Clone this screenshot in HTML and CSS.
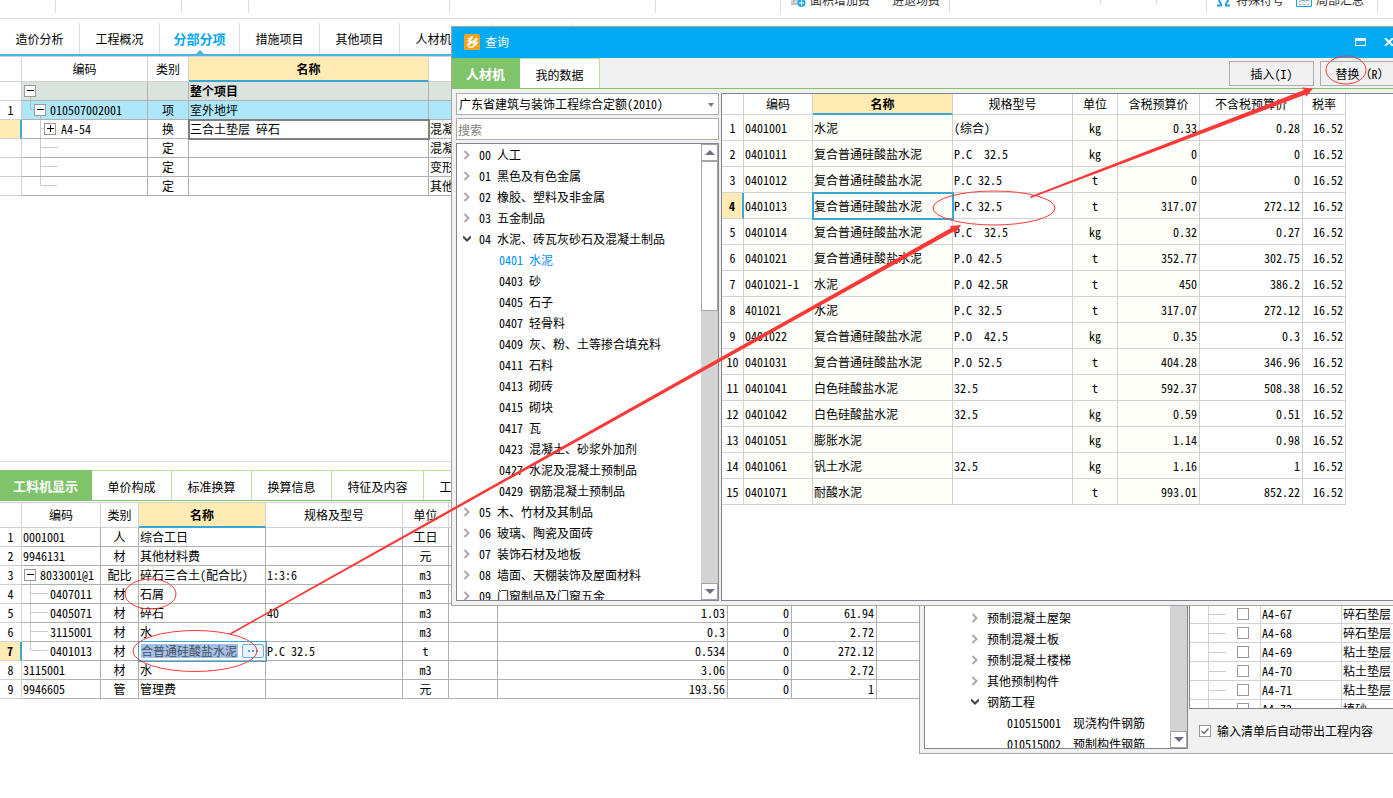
FILE: index.html
```html
<!DOCTYPE html>
<html lang="zh-CN">
<head>
<meta charset="utf-8">
<title>查询</title>
<link rel="stylesheet" href="styles.css">
</head>
<body>
<svg class="defs" width="0" height="0" aria-hidden="true">
  <symbol id="closed" viewBox="0 0 8 10"><path d="M1.500 1L5.500 5l-4 4" fill="none" stroke="#aaa" stroke-width="2"/></symbol>
  <symbol id="open" viewBox="0 0 8 10"><path d="M0 2.500l4 4 4-4" fill="none" stroke="#444" stroke-width="2"/></symbol>
  <symbol id="branch" viewBox="0 0 28 18"><path d="M8.500 0v18M9 8.500h17" stroke="#ccc"/></symbol>
  <symbol id="branch-deep" viewBox="0 0 39 18"><path d="M18.500 0v18M19 8.500h17" stroke="#ccc"/></symbol>
</svg>
<main class="app">
  <header class="ribbon">
    <div class="group g56"></div><div class="group g126"></div><div class="group g67"></div><div class="group g201"></div><div class="group g206"></div><div class="group g125"></div>
    <div class="group g169">
      <span class="tool"><svg width="16" height="16" viewBox="0 0 16 16"><path d="M1 2h11v11H1z" fill="#d6d6d6"/><path d="M1 13h8M3 10h2M7 10h2" stroke="#999"/><circle cx="11.500" cy="12" r="4" fill="#1ba8e8"/><path d="M9 12h5M11.500 9.500v5" stroke="#fff"/></svg>面积增加费</span>
      <span class="tool tool-late">进退场费</span>
    </div>
    <div class="group g151 short"></div><div class="group g56 short"></div><div class="group g50"></div>
    <div class="group g171">
      <span class="tool"><svg width="16" height="16" viewBox="0 0 16 16"><path d="M1 14.500h4c1-2-2-3-2-6M14 14.500h-4c-1-2 2-3 2-6" fill="none" stroke="#2b9fd6" stroke-width="2"/></svg>特殊符号</span>
      <span class="tool"><svg width="16" height="16" viewBox="0 0 16 16"><path d="M.5 2.500h15v13H.5z" fill="#e8f6fd" stroke="#1ba8e8"/><path d="M3 13.500h2M7 13.500h2M11 13.500h2" stroke="#d8b860"/><path d="M3 11l3-2 3 1 4-1" fill="none" stroke="#8aa0a8"/></svg>局部汇总</span>
    </div>
  </header>

  <section class="pane-top">
    <nav class="tabs tabs-blue">
      <button class="tab">造价分析</button><button class="tab">工程概况</button><button class="tab active">分部分项<svg class="notch" width="8" height="4" viewBox="0 0 8 4"><path d="M0 4L4 0l4 4z" fill="#44b6e6"/></svg></button><button class="tab">措施项目</button><button class="tab">其他项目</button><button class="tab wide">人材机汇总</button><button class="tab">费用汇总</button>
    </nav>
    <table class="sheet">
      <colgroup><col class="c22"><col class="c126"><col class="c41"><col class="c240"><col></colgroup>
      <thead><tr><th></th><th>编码</th><th>类别</th><th class="hot">名称</th><th></th></tr></thead>
      <tbody>
        <tr class="project"><td class="num"></td><td><div class="node"><svg width="22" height="18" viewBox="0 0 22 18"><path d="M8.500 15v3" stroke="#bbb"/><rect x="2.500" y="3.500" width="11" height="11" fill="#fff" stroke="#999"/><path d="M5 8.500h7" stroke="#000"/></svg></div></td><td></td><td>整个项目</td><td></td></tr>
        <tr class="item"><td class="num">1</td><td><div class="node"><svg width="28" height="18" viewBox="0 0 28 18"><path d="M8.500 0v8.500h4M18.500 14v4" fill="none" stroke="#bbb"/><rect x="12.500" y="3.500" width="11" height="11" fill="#fff" stroke="#999"/><path d="M15 8.500h7" stroke="#000"/></svg>010507002001</div></td><td class="mid">项</td><td>室外地坪</td><td></td></tr>
        <tr><td class="num now"></td><td><div class="node"><svg width="39" height="18" viewBox="0 0 39 18"><path d="M18.500 0v18M19 8.500h4" stroke="#ccc"/><rect x="22.500" y="3.500" width="11" height="11" fill="#fff" stroke="#999"/><path d="M25 8.500h7M28.500 5v7" stroke="#000"/></svg>A4-54</div></td><td class="mid">换</td><td class="focus-grey">三合土垫层 碎石</td><td>混凝土</td></tr>
        <tr><td class="num"></td><td><div class="node"><svg width="39" height="18"><use href="#branch-deep"/></svg></div></td><td class="mid">定</td><td></td><td>混凝土</td></tr>
        <tr><td class="num"></td><td><div class="node"><svg width="39" height="18"><use href="#branch-deep"/></svg></div></td><td class="mid">定</td><td></td><td>变形缝</td></tr>
        <tr><td class="num"></td><td><div class="node"><svg width="39" height="18" viewBox="0 0 39 18"><path d="M18.500 0v8.500h17" fill="none" stroke="#ccc"/></svg></div></td><td class="mid">定</td><td></td><td>其他</td></tr>
      </tbody>
    </table>
  </section>

  <section class="pane-bottom">
    <nav class="tabs tabs-green">
      <button class="tab wide active">工料机显示</button><button class="tab">单价构成</button><button class="tab">标准换算</button><button class="tab">换算信息</button><button class="tab wide">特征及内容</button><button class="tab wide">工程量明细</button>
    </nav>
    <table class="sheet">
      <colgroup><col class="c22"><col class="c79"><col class="c38"><col class="c127"><col class="c137"><col class="c46"><col class="c49"><col class="c230"><col class="c64"><col class="c85"><col></colgroup>
      <thead><tr><th></th><th>编码</th><th>类别</th><th class="hot">名称</th><th>规格及型号</th><th>单位</th><th></th><th></th><th></th><th></th><th></th></tr></thead>
      <tbody>
        <tr><td class="num">1</td><td>0001001</td><td class="mid">人</td><td>综合工日</td><td></td><td class="mid">工日</td><td></td><td></td><td></td><td></td><td></td></tr>
        <tr><td class="num">2</td><td>9946131</td><td class="mid">材</td><td>其他材料费</td><td></td><td class="mid">元</td><td></td><td></td><td></td><td></td><td></td></tr>
        <tr><td class="num">3</td><td><div class="node"><svg width="18" height="18" viewBox="0 0 18 18"><path d="M8.500 14v4" stroke="#ccc"/><rect x="2.500" y="3.500" width="11" height="11" fill="#fff" stroke="#999"/><path d="M5 8.500h7" stroke="#000"/></svg>8033001@1</div></td><td class="mid">配比</td><td>碎石三合土(配合比)</td><td>1:3:6</td><td class="mid">m3</td><td></td><td></td><td></td><td></td><td></td></tr>
        <tr><td class="num">4</td><td><div class="node"><svg width="28" height="18"><use href="#branch"/></svg>0407011</div></td><td class="mid">材</td><td>石屑</td><td></td><td class="mid">m3</td><td></td><td></td><td></td><td></td><td></td></tr>
        <tr><td class="num">5</td><td><div class="node"><svg width="28" height="18"><use href="#branch"/></svg>0405071</div></td><td class="mid">材</td><td>碎石</td><td>40</td><td class="mid">m3</td><td></td><td class="val">1.03</td><td class="val">0</td><td class="val">61.94</td><td></td></tr>
        <tr><td class="num">6</td><td><div class="node"><svg width="28" height="18"><use href="#branch"/></svg>3115001</div></td><td class="mid">材</td><td>水</td><td></td><td class="mid">m3</td><td></td><td class="val">0.3</td><td class="val">0</td><td class="val">2.72</td><td></td></tr>
        <tr><td class="num now">7</td><td><div class="node"><svg width="28" height="18" viewBox="0 0 28 18"><path d="M8.500 0v8.500h17" fill="none" stroke="#ccc"/></svg>0401013</div></td><td class="mid">材</td><td class="focus-thin"><div class="editor"><input class="edit" type="text" aria-label="名称" value="合普通硅酸盐水泥"><button class="more" aria-label="更多"><svg width="12" height="4" viewBox="0 0 12 4"><path d="M1 1h2v2H1zM5 1h2v2H5zM9 1h2v2H9z" fill="#5fa3dc"/></svg></button></div></td><td>P.C 32.5</td><td class="mid">t</td><td></td><td class="val">0.534</td><td class="val">0</td><td class="val">272.12</td><td></td></tr>
        <tr><td class="num">8</td><td>3115001</td><td class="mid">材</td><td>水</td><td></td><td class="mid">m3</td><td></td><td class="val">3.06</td><td class="val">0</td><td class="val">2.72</td><td></td></tr>
        <tr><td class="num">9</td><td>9946605</td><td class="mid">管</td><td>管理费</td><td></td><td class="mid">元</td><td></td><td class="val">193.56</td><td class="val">0</td><td class="val">1</td><td></td></tr>
      </tbody>
    </table>
  </section>

  <section class="window window-back">
    <div class="back-tree">
      <ul class="tree">
        <li><svg class="chev" width="8" height="10"><use href="#closed"/></svg>预制混凝土屋架</li>
        <li><svg class="chev" width="8" height="10"><use href="#closed"/></svg>预制混凝土板</li>
        <li><svg class="chev" width="8" height="10"><use href="#closed"/></svg>预制混凝土楼梯</li>
        <li><svg class="chev" width="8" height="10"><use href="#closed"/></svg>其他预制构件</li>
        <li><svg class="chev" width="8" height="10"><use href="#open"/></svg>钢筋工程</li>
        <li class="leaf">010515001&nbsp; 现浇构件钢筋</li>
        <li class="leaf">010515002&nbsp; 预制构件钢筋</li>
      </ul>
      <div class="scroll"><span class="track"></span><button class="arrow" aria-label="向下"><svg width="10" height="5" viewBox="0 0 10 5"><path d="M0 0h10L5 5z" fill="#6b6f80"/></svg></button></div>
    </div>
    <div class="back-side">
      <div class="back-grid">
        <table class="sheet light">
          <colgroup><col class="c19"><col class="c52"><col class="c81"><col></colgroup>
          <tbody>
            <tr><td></td><td><div class="pick"><span class="dash"></span><input class="check" type="checkbox" aria-label="A4-67"></div></td><td>A4-67</td><td>碎石垫层</td></tr>
            <tr><td></td><td><div class="pick"><span class="dash"></span><input class="check" type="checkbox" aria-label="A4-68"></div></td><td>A4-68</td><td>碎石垫层</td></tr>
            <tr><td></td><td><div class="pick"><span class="dash"></span><input class="check" type="checkbox" aria-label="A4-69"></div></td><td>A4-69</td><td>粘土垫层</td></tr>
            <tr><td></td><td><div class="pick"><span class="dash"></span><input class="check" type="checkbox" aria-label="A4-70"></div></td><td>A4-70</td><td>粘土垫层</td></tr>
            <tr><td></td><td><div class="pick"><span class="dash"></span><input class="check" type="checkbox" aria-label="A4-71"></div></td><td>A4-71</td><td>粘土垫层</td></tr>
            <tr><td></td><td><div class="pick"><span class="dash"></span><input class="check" type="checkbox" aria-label="A4-72"></div></td><td>A4-72</td><td>填砂</td></tr>
          </tbody>
        </table>
      </div>
      <label class="option"><input class="check" type="checkbox" checked>输入清单后自动带出工程内容</label>
    </div>
  </section>

  <section class="window window-front">
    <div class="title">
      <svg width="16" height="16" viewBox="0 0 16 16"><rect width="16" height="16" rx="2" fill="#f9a01b"/><path d="M2 4.500C4 4.500 6 3 8.500 2L9 4 6 7l3-.5L8 9l-4 3.500L3 10l3-2.500H3L5 5z" fill="#fff"/><path d="M9 6.500L12.500 3.500 14 5l-2.500 3 2.500-.5-1 3L8 14H5l-1-1.500h3.500L11 9.500 8 10z" fill="#fff"/></svg>
      <h1 class="title-text">查询</h1>
      <button class="win-btn" aria-label="最大化"><svg width="11" height="8" viewBox="0 0 11 8"><path d="M.5.5h10v7H.5z" fill="none" stroke="#fff"/><path d="M0 0h11v3H0z" fill="#fff"/></svg></button>
      <button class="win-btn" aria-label="关闭"><svg width="11" height="8" viewBox="0 0 11 8"><path d="M1 0l8 8M9 0L1 8" stroke="#fff" stroke-width="2"/></svg></button>
    </div>
    <div class="bar">
      <nav class="tabs tabs-dialog"><button class="tab short-tab active">人材机</button><button class="tab">我的数据</button></nav>
      <div class="actions"><button class="btn">插入(I)</button><button class="btn">替换（R）</button></div>
    </div>
    <div class="body">
      <div class="left">
        <div class="combo"><select class="select" aria-label="定额库"><option>广东省建筑与装饰工程综合定额(2010)</option></select><svg class="combo-arrow" width="6" height="4" viewBox="0 0 6 4"><path d="M0 0h6L3 4z" fill="#777b88"/></svg></div>
        <input class="search" type="text" placeholder="搜索" aria-label="搜索">
        <div class="tree-box">
          <ul class="tree">
            <li><svg class="chev" width="8" height="10"><use href="#closed"/></svg>00 人工</li>
            <li><svg class="chev" width="8" height="10"><use href="#closed"/></svg>01 黑色及有色金属</li>
            <li><svg class="chev" width="8" height="10"><use href="#closed"/></svg>02 橡胶、塑料及非金属</li>
            <li><svg class="chev" width="8" height="10"><use href="#closed"/></svg>03 五金制品</li>
            <li><svg class="chev" width="8" height="10"><use href="#open"/></svg>04 水泥、砖瓦灰砂石及混凝土制品</li>
            <li class="leaf chosen">0401 水泥</li>
            <li class="leaf">0403 砂</li>
            <li class="leaf">0405 石子</li>
            <li class="leaf">0407 轻骨料</li>
            <li class="leaf">0409 灰、粉、土等掺合填充料</li>
            <li class="leaf">0411 石料</li>
            <li class="leaf">0413 砌砖</li>
            <li class="leaf">0415 砌块</li>
            <li class="leaf">0417 瓦</li>
            <li class="leaf">0423 混凝土、砂浆外加剂</li>
            <li class="leaf">0427 水泥及混凝土预制品</li>
            <li class="leaf">0429 钢筋混凝土预制品</li>
            <li><svg class="chev" width="8" height="10"><use href="#closed"/></svg>05 木、竹材及其制品</li>
            <li><svg class="chev" width="8" height="10"><use href="#closed"/></svg>06 玻璃、陶瓷及面砖</li>
            <li><svg class="chev" width="8" height="10"><use href="#closed"/></svg>07 装饰石材及地板</li>
            <li><svg class="chev" width="8" height="10"><use href="#closed"/></svg>08 墙面、天棚装饰及屋面材料</li>
            <li><svg class="chev" width="8" height="10"><use href="#closed"/></svg>09 门窗制品及门窗五金</li>
          </ul>
          <div class="scroll"><button class="arrow" aria-label="向上"><svg width="10" height="5" viewBox="0 0 10 5"><path d="M0 5h10L5 0z" fill="#6b6f80"/></svg></button><span class="thumb"></span><span class="track"></span><button class="arrow" aria-label="向下"><svg width="10" height="5" viewBox="0 0 10 5"><path d="M0 0h10L5 5z" fill="#6b6f80"/></svg></button></div>
        </div>
      </div>
      <div class="right">
        <table class="result">
          <colgroup><col class="c22"><col class="c69"><col class="c140"><col class="c120"><col class="c45"><col class="c82"><col class="c103"><col class="c43"></colgroup>
          <thead><tr><th></th><th>编码</th><th class="hot">名称</th><th>规格型号</th><th>单位</th><th>含税预算价</th><th>不含税预算价</th><th>税率</th></tr></thead>
          <tbody>
            <tr><td class="num">1</td><td>0401001</td><td>水泥</td><td>(综合)</td><td>kg</td><td>0.33</td><td>0.28</td><td>16.52</td></tr>
            <tr><td class="num">2</td><td>0401011</td><td>复合普通硅酸盐水泥</td><td>P.C&nbsp; 32.5</td><td>kg</td><td>0</td><td>0</td><td>16.52</td></tr>
            <tr><td class="num">3</td><td>0401012</td><td>复合普通硅酸盐水泥</td><td>P.C 32.5</td><td>t</td><td>0</td><td>0</td><td>16.52</td></tr>
            <tr><td class="num now">4</td><td>0401013</td><td class="focus">复合普通硅酸盐水泥</td><td>P.C 32.5</td><td>t</td><td>317.07</td><td>272.12</td><td>16.52</td></tr>
            <tr><td class="num">5</td><td>0401014</td><td>复合普通硅酸盐水泥</td><td>P.C&nbsp; 32.5</td><td>kg</td><td>0.32</td><td>0.27</td><td>16.52</td></tr>
            <tr><td class="num">6</td><td>0401021</td><td>复合普通硅酸盐水泥</td><td>P.O 42.5</td><td>t</td><td>352.77</td><td>302.75</td><td>16.52</td></tr>
            <tr><td class="num">7</td><td>0401021-1</td><td>水泥</td><td>P.O 42.5R</td><td>t</td><td>450</td><td>386.2</td><td>16.52</td></tr>
            <tr><td class="num">8</td><td>401021</td><td>水泥</td><td>P.C 32.5</td><td>t</td><td>317.07</td><td>272.12</td><td>16.52</td></tr>
            <tr><td class="num">9</td><td>0401022</td><td>复合普通硅酸盐水泥</td><td>P.O&nbsp; 42.5</td><td>kg</td><td>0.35</td><td>0.3</td><td>16.52</td></tr>
            <tr><td class="num">10</td><td>0401031</td><td>复合普通硅酸盐水泥</td><td>P.O 52.5</td><td>t</td><td>404.28</td><td>346.96</td><td>16.52</td></tr>
            <tr><td class="num">11</td><td>0401041</td><td>白色硅酸盐水泥</td><td>32.5</td><td>t</td><td>592.37</td><td>508.38</td><td>16.52</td></tr>
            <tr><td class="num">12</td><td>0401042</td><td>白色硅酸盐水泥</td><td>32.5</td><td>kg</td><td>0.59</td><td>0.51</td><td>16.52</td></tr>
            <tr><td class="num">13</td><td>0401051</td><td>膨胀水泥</td><td></td><td>kg</td><td>1.14</td><td>0.98</td><td>16.52</td></tr>
            <tr><td class="num">14</td><td>0401061</td><td>钒土水泥</td><td>32.5</td><td>kg</td><td>1.16</td><td>1</td><td>16.52</td></tr>
            <tr><td class="num">15</td><td>0401071</td><td>耐酸水泥</td><td></td><td>t</td><td>993.01</td><td>852.22</td><td>16.52</td></tr>
          </tbody>
        </table>
      </div>
    </div>
  </section>

  <svg class="marks" width="1393" height="798" viewBox="0 0 1393 798">
    <g fill="none" stroke="#fb3a37" stroke-width="1">
      <ellipse cx="994" cy="208" rx="61" ry="17"/><ellipse cx="1346" cy="70" rx="20" ry="14"/><ellipse cx="150.500" cy="594" rx="25.500" ry="15"/><ellipse cx="195" cy="651" rx="62" ry="20.500"/>
    </g>
    <g fill="#fb3a37">
      <path d="M229.500 633.500L951 228l-1-2 11-1-6 9-1.500-2.500L230 635z"/>
      <path d="M1030 196.500L1304 90l-2-2.500 11 1-7 8.500-.5-2.500L1031 198z"/>
    </g>
  </svg>
</main>
</body>
</html>
```

FILE: styles.css
```css
* { box-sizing: border-box; }
body, button, input, select { font-family: "Noto Sans Mono CJK SC", "Noto Sans CJK SC", sans-serif; font-size: 12px; line-height: 18px; color: #000; }
body { margin: 0; background: #fff; overflow: hidden; }
button { border: 0; padding: 0; background: none; }
svg { display: block; flex: none; }
ul { list-style: none; margin: 0; padding: 0; }
.defs { position: absolute; }

.app { position: relative; display: flex; flex-direction: column; height: 100vh; overflow: hidden; }

.ribbon { display: flex; align-items: flex-start; flex: none; height: 19px; border-bottom: 1px solid #dcdcdc; overflow: hidden; }
.group { display: flex; flex: none; gap: 12px; height: 13px; padding-left: 9px; border-right: 1px solid #dcdcdc; }
.group.short { height: 4px; }
.tool { display: flex; gap: 4px; height: 18px; margin-top: -9px; white-space: nowrap; color: #333; }
.tool-late { margin-left: 10px; }
.g50 { width: 50px; } .g56 { width: 56px; } .g67 { width: 67px; } .g125 { width: 125px; } .g126 { width: 126px; } .g151 { width: 151px; } .g169 { width: 169px; } .g171 { width: 171px; } .g201 { width: 201px; } .g206 { width: 206px; }

.pane-top { flex: 1; padding-top: 4px; border-bottom: 1px solid #dcdcdc; }
.pane-bottom { flex: none; height: 336px; padding-top: 8px; }

.tabs { display: flex; }
.tab { flex: none; width: 80px; border-right: 1px solid #dcdcdc; white-space: nowrap; }
.tab.wide { width: 92px; }
.tabs-blue { height: 33px; border-bottom: 2px solid #44b6e6; }
.tabs-blue .active { position: relative; color: #02a9f3; font-size: 13px; font-weight: bold; }
.notch { position: absolute; left: 36px; bottom: 0; }
.tabs-green { height: 31px; border-bottom: 1px solid #7fc36a; }
.tabs-green .tab, .tabs-dialog .tab { padding-top: 3px; border-top: 1px solid #b5e3a0; border-right: 1px solid #b5e3a0; background: #fff; }
.tabs-green .active, .tabs-dialog .active { padding-top: 0; border-color: #7fc36a; background: #7fc36a; color: #fff; font-size: 13px; font-weight: bold; }
.tabs-dialog .short-tab { width: 68px; }

table { border-collapse: separate; border-spacing: 0; table-layout: fixed; }
th, td { padding: 0 0 0 1px; overflow: hidden; white-space: nowrap; text-align: left; }
th { padding: 0; border-right: 1px solid #d2d2d2; border-bottom: 1px solid #d2d2d2; font-weight: normal; text-align: center; }
th.hot { background: #ffebb3; border-bottom: 2px solid #3ba6d2; font-weight: bold; }
.sheet { width: 100%; border-top: 1px solid #d2d2d2; }
.pane-bottom .sheet { margin-top: 1px; }
.sheet th { height: 25px; }
.sheet td { height: 19px; border-right: 1px solid #b0b0b0; border-bottom: 1px solid #b0b0b0; }
.sheet .num { border-color: #d2d2d2; }
.sheet .num, .result .num { padding: 0; text-align: center; background: #fff; }
.sheet .now, .result .now { background: #ffebb3; border-right: 2px solid #3ba6d2; font-weight: bold; }
.sheet .mid { padding: 0; text-align: center; }
.sheet .val { padding: 0 2px 0 0; text-align: right; }
.node { display: flex; height: 18px; margin-left: -1px; }
.project td { background: #dae3dd; font-weight: bold; }
.project .num { background: #fff; }
.item td { background: #ade7f9; }
.focus-grey { outline: 2px solid #808080; outline-offset: -1px; }
.focus-thin { outline: 1px solid #3ba6d2; }
.editor { display: flex; align-items: center; gap: 4px; height: 18px; padding-left: 1px; }
.edit { width: 97px; height: 14px; padding: 0; border: 0; background: #a1c1ea; color: #4a4f58; line-height: 14px; }
.more { display: flex; align-items: center; justify-content: center; width: 22px; height: 14px; border: 1px solid #6aabe0; border-radius: 2px; background: #eaf3fb; }
.c19 { width: 19px; } .c22 { width: 22px; } .c38 { width: 38px; } .c41 { width: 41px; } .c43 { width: 43px; } .c45 { width: 45px; } .c46 { width: 46px; } .c49 { width: 49px; } .c52 { width: 52px; } .c64 { width: 64px; } .c69 { width: 69px; } .c79 { width: 79px; } .c81 { width: 81px; } .c82 { width: 82px; } .c85 { width: 85px; } .c103 { width: 103px; } .c120 { width: 120px; } .c126 { width: 126px; } .c127 { width: 127px; } .c137 { width: 137px; } .c140 { width: 140px; } .c230 { width: 230px; } .c240 { width: 240px; }

.window { position: absolute; right: -16px; border: 1px solid #a5a5a5; background: #f1f1f1; }
.window-front { top: 26px; left: 451px; }
.window-back { display: flex; gap: 1px; top: 600px; left: 919px; height: 154px; padding: 0 4px 4px; }

.title { display: flex; align-items: center; height: 31px; padding: 0 13px 1px 12px; background: #02a9f3; }
.title-text { flex: 1; margin: 0 0 0 5px; font-size: 12px; font-weight: normal; color: #fff; }
.win-btn { margin-left: 18px; }
.bar { display: flex; justify-content: space-between; height: 31px; border-bottom: 1px solid #7fc36a; }
.actions { display: flex; gap: 6px; padding: 3px 3px 2px 0; }
.btn { width: 85px; height: 25px; border: 1px solid #adadad; }

.body { display: flex; gap: 2px; height: 516px; padding: 4px; }
.left { display: flex; flex-direction: column; gap: 3px; flex: none; width: 263px; }
.combo { position: relative; height: 22px; }
.select { appearance: none; width: 100%; height: 22px; padding: 0 2px; border: 1px solid #adadad; border-radius: 0; background: #fff; }
.combo-arrow { position: absolute; right: 5px; top: 10px; }
.search { width: 100%; height: 22px; padding: 0 1px; border: 1px solid #adadad; }
.search::placeholder { color: #808080; }
.tree-box { display: flex; flex: 1; min-height: 0; border: 1px solid #82858f; background: #fff; overflow: hidden; }
.tree { flex: 1; }
.tree li { display: flex; align-items: center; height: 21px; padding-left: 6px; white-space: nowrap; }
.tree .leaf { padding-left: 42px; }
.tree .chosen { color: #0090ff; }
.chev { margin-right: 8px; }
.scroll { display: flex; flex-direction: column; flex: none; width: 17px; background: #d3d3d3; }
.arrow { display: flex; align-items: center; justify-content: center; flex: none; height: 17px; border: 1px solid #a5a5a5; background: #fff; }
.thumb { height: 150px; border: 1px solid #a5a5a5; background: #fff; }
.track { flex: 1; }

.right { flex: 1; border: 1px solid #82858f; background: #fff; overflow: hidden; }
.result { width: 624px; }
.result th { height: 21px; }
.result td { height: 26px; border-right: 1px solid #d2d2d2; border-bottom: 1px solid #d2d2d2; background: #fff; }
.result td:nth-child(2), .result td:nth-child(3), .result td:nth-child(5), .result td:nth-child(6) { background: #fffffa; }
.result td:nth-child(5) { padding: 0; text-align: center; }
.result td:nth-child(n+6) { padding: 0 2px 0 0; text-align: right; }
.result .focus { outline: 2px solid #3ba6d2; outline-offset: -1px; }

.back-tree { display: flex; flex: none; width: 264px; border: 1px solid #82858f; background: #fff; overflow: hidden; }
.back-tree .tree { padding-top: 5px; }
.back-tree .tree li { padding-left: 46px; }
.back-tree .tree .leaf { padding-left: 82px; }
.back-side { flex: 1; min-width: 0; }
.back-grid { height: 108px; padding-top: 3px; border-bottom: 1px solid #82858f; border-left: 1px solid #82858f; background: #fff; overflow: hidden; }
.light td { border-color: #d2d2d2; }
.pick { display: flex; align-items: center; height: 18px; margin-left: -1px; }
.dash { width: 17px; margin-right: 11px; border-top: 1px solid #ccc; }
.check { appearance: none; flex: none; width: 12px; height: 12px; margin: 0; border: 1px solid #999; background: #fff; }
.option { display: flex; align-items: center; gap: 6px; height: 44px; padding-left: 10px; white-space: nowrap; }
.option .check { background: #fff url("data:image/svg+xml,%3Csvg xmlns='http://www.w3.org/2000/svg' width='10' height='10'%3E%3Cpath d='M1.500 5l2.500 2.500L8.500 2.500' fill='none' stroke='%23666a7a' stroke-width='1.500'/%3E%3C/svg%3E") no-repeat; }
.marks { position: absolute; top: 0; left: 0; pointer-events: none; }
```
